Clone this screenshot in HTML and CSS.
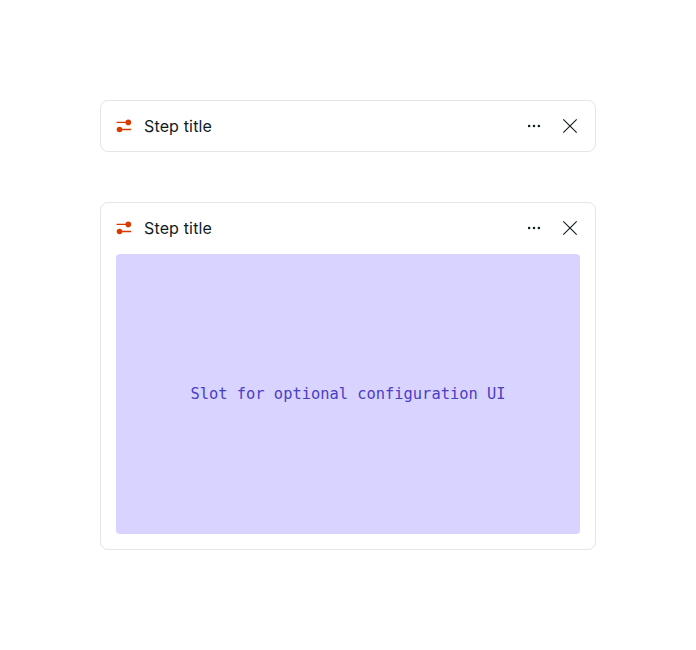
FILE: index.html
```html
<!DOCTYPE html>
<html lang="en">
<head>
<meta charset="utf-8">
<title>Step cards</title>
<link rel="stylesheet" href="styles.css">
</head>
<body>
<main class="stack">
  <section class="card">
    <header class="head">
      <svg class="icon" viewBox="0 0 16 16"><path d="M.6 4.400H12M4 11.500H15.200" stroke="#d83b01" stroke-width="1.400"/><circle cx="12.300" cy="4.400" r="2.800" fill="#d83b01"/><circle cx="3.500" cy="11.500" r="2.800" fill="#d83b01"/></svg>
      <h2 class="title">Step title</h2>
      <svg class="icon" viewBox="0 0 16 16"><g fill="#101c1f"><circle cx="3.100" cy="8" r="1.250"/><circle cx="8" cy="8" r="1.250"/><circle cx="12.900" cy="8" r="1.250"/></g></svg>
      <svg class="icon close" viewBox="0 0 16 16"><path d="M1.300 1.300l13.400 13.400M14.700 1.300l-13.400 13.400" stroke="#101c1f" stroke-width="1.100"/></svg>
    </header>
  </section>
  <section class="card">
    <header class="head">
      <svg class="icon" viewBox="0 0 16 16"><path d="M.6 4.400H12M4 11.500H15.200" stroke="#d83b01" stroke-width="1.400"/><circle cx="12.300" cy="4.400" r="2.800" fill="#d83b01"/><circle cx="3.500" cy="11.500" r="2.800" fill="#d83b01"/></svg>
      <h2 class="title">Step title</h2>
      <svg class="icon" viewBox="0 0 16 16"><g fill="#101c1f"><circle cx="3.100" cy="8" r="1.250"/><circle cx="8" cy="8" r="1.250"/><circle cx="12.900" cy="8" r="1.250"/></g></svg>
      <svg class="icon close" viewBox="0 0 16 16"><path d="M1.300 1.300l13.400 13.400M14.700 1.300l-13.400 13.400" stroke="#101c1f" stroke-width="1.100"/></svg>
    </header>
    <div class="slot">Slot for optional configuration UI</div>
  </section>
</main>
</body>
</html>
```
FILE: styles.css
```css
body {
  margin: 0;
  background: #fff;
  font-family: Inter, sans-serif;
}
.stack {
  display: flex;
  flex-direction: column;
  gap: 50px;
  padding: 100px;
}
.card {
  box-sizing: border-box;
  border: 1px solid #e5e5e5;
  border-radius: 8px;
  padding: 0 15px;
}
.head {
  display: flex;
  align-items: center;
  height: 50px;
}
.icon {
  width: 16px;
  height: 16px;
  flex: none;
}
.title {
  flex: 1;
  margin: 0 0 0 12px;
  font-size: 16px;
  font-weight: 400;
  line-height: 24px;
  letter-spacing: 0.15px;
  color: #101c1f;
}
.close {
  margin: 0 2px 0 20px;
}
.slot {
  display: flex;
  align-items: center;
  justify-content: center;
  height: 280px;
  margin: 1px 0 15px;
  border-radius: 4px;
  background: #d9d3ff;
  color: #4b3dc4;
  font: 15.400px "DejaVu Sans Mono", monospace;
}
```
